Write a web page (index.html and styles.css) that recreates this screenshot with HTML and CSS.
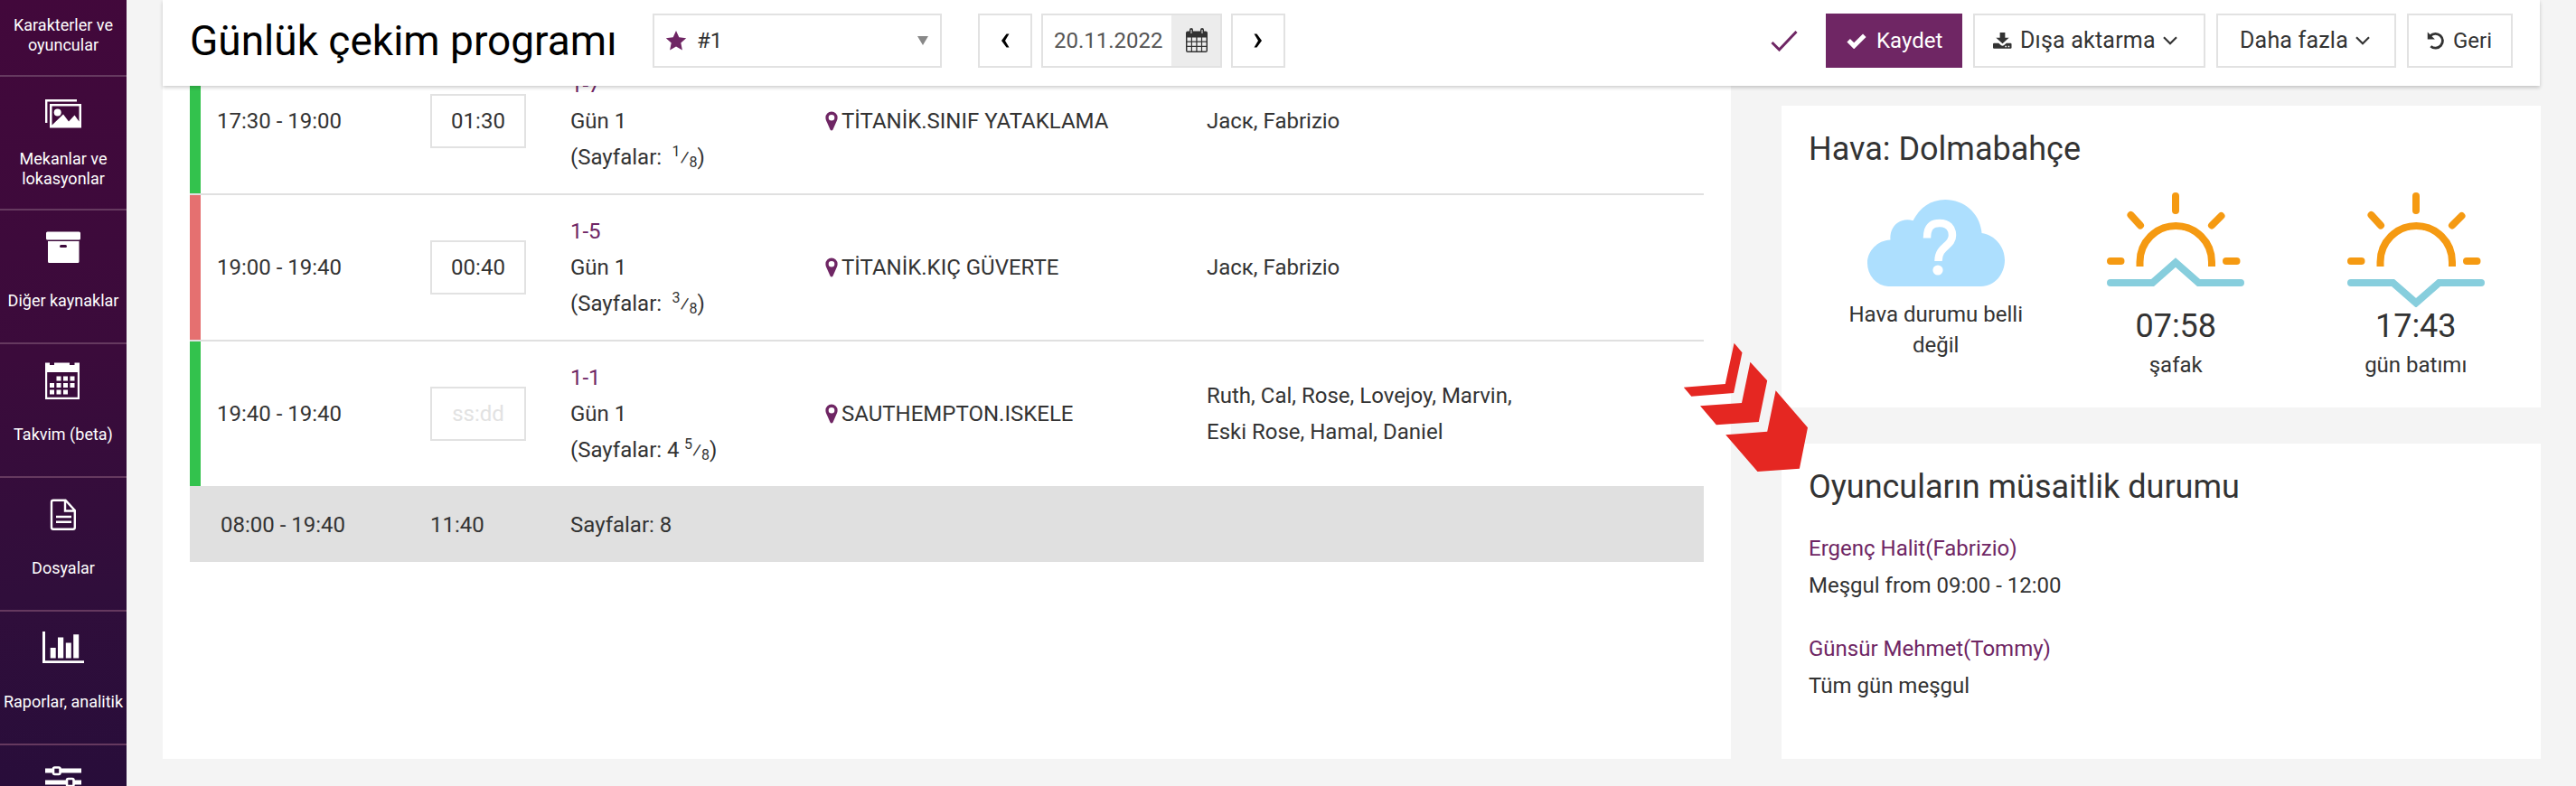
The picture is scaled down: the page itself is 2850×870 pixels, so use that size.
FILE: index.html
```html
<!DOCTYPE html>
<html lang="tr">
<head>
<meta charset="utf-8">
<title>Günlük çekim programı</title>
<link rel="stylesheet" href="styles.css">
</head>
<body>
<div class="app">
  <nav class="sidebar">
    <div class="nav-list">
      <a class="nav-item nav-item--two">
        <svg class="nav-icon" viewBox="0 0 48 48"></svg>
        <span class="nav-label">Karakterler ve<br>oyuncular</span>
      </a>
      <a class="nav-item nav-item--two">
        <svg class="nav-icon" viewBox="0 0 48 48"><path d="M5.2 35V10.200H39" fill="none" stroke="#fff" stroke-width="2.400"/><path fill="#fff" fill-rule="evenodd" d="M9 14h35v26.500H9zM11.500 16.500v21L24 25.500l6 8 6.500-7 5 7v-17z"/><circle cx="17.700" cy="23.500" r="4" fill="#fff"/></svg>
        <span class="nav-label">Mekanlar ve<br>lokasyonlar</span>
      </a>
      <a class="nav-item">
        <svg class="nav-icon" viewBox="0 0 48 48" fill="#fff"><rect x="5" y="7.500" width="38" height="9" rx="1.500"/><path fill-rule="evenodd" d="M7 18h34.500v22.500a1.500 1.500 0 0 1-1.500 1.500H8.500A1.500 1.500 0 0 1 7 40.500zM21.500 22a1.500 1.500 0 0 0 0 3h5a1.500 1.500 0 0 0 0-3z"/></svg>
        <span class="nav-label">Diğer kaynaklar</span>
      </a>
      <a class="nav-item">
        <svg class="nav-icon" viewBox="0 0 48 48" fill="#fff"><path fill-rule="evenodd" d="M4 4.500h5v2.500h5v-2.500h17v2.500h5.500v-2.500H42V45H4zM6.200 15v27.700h33.600V15z"/><path d="M16.500 19.500h5v5h-5zm7.500 0h5v5h-5zm7.500 0h5v5h-5zM9 27h5v5H9zm7.500 0h5v5h-5zm7.500 0h5v5h-5zm7.500 0h5v5h-5zM9 34.500h5v5H9zm7.500 0h5v5h-5zm7.500 0h5v5h-5z"/></svg>
        <span class="nav-label">Takvim (beta)</span>
      </a>
      <a class="nav-item">
        <svg class="nav-icon" viewBox="0 0 48 48" fill="none" stroke="#fff" stroke-width="2.400"><path d="M13 8.700h13.500L36.800 20v18.800a2 2 0 0 1-2 2H13a2 2 0 0 1-2-2V10.700a2 2 0 0 1 2-2zM26 8.700V20.500h10.800"/><path d="M16 27h17M16 32.800h17" stroke-width="2.600"/></svg>
        <span class="nav-label">Dosyalar</span>
      </a>
      <a class="nav-item">
        <svg class="nav-icon" viewBox="0 0 48 48" fill="#fff"><path d="M1 6h3v32.200h43V41H1zM9.700 24h6v11.500h-6zm8.300-11.500h6.200v23H18zm8.800 6h6v17h-6zm8.400-9.200h6v26.200h-6z"/></svg>
        <span class="nav-label">Raporlar, analitik</span>
      </a>
      <a class="nav-item">
        <svg class="nav-icon" viewBox="0 0 48 48"><path fill="#fff" d="M4 9.500h40v5H4zm0 13h40v5H4z"/><rect x="13" y="8.500" width="7.500" height="7.500" rx="1.500" fill="#2a0d39" stroke="#fff" stroke-width="2.600"/><rect x="28" y="21" width="7.500" height="8" rx="1.500" fill="#2a0d39" stroke="#fff" stroke-width="2.600"/></svg>
      </a>
    </div>
  </nav>

  <div class="page">
    <header class="topbar">
      <h1 class="title">Günlük çekim programı</h1>
      <div class="select">
        <svg class="star" viewBox="0 0 24 24"><path fill="#6f2664" d="M12 1l3.300 7.300 7.900.9-5.900 5.400 1.600 7.900L12 18.500l-6.900 4 1.600-7.900L.8 9.200l7.900-.9z"/></svg>
        <span>#1</span>
        <svg class="caret" viewBox="0 0 12 10"><path fill="#888" d="M0 0h12L6 10z"/></svg>
      </div>
      <div class="date-nav">
        <button class="btn btn-square"><svg viewBox="0 0 10 16"><path fill="#000" d="M6.500.5h3L5 8l4.500 7.500h-3L1 8z"/></svg></button>
        <div class="date">
          <span class="date-value">20.11.2022</span>
          <span class="date-icon"><svg viewBox="0 0 24 28"><path fill="#333" fill-rule="evenodd" d="M2 3.500h2V2a2 2 0 0 1 4 0v1.500h8V2a2 2 0 0 1 4 0v1.500h2a2 2 0 0 1 2 2V25a2 2 0 0 1-2 2H2a2 2 0 0 1-2-2V5.500a2 2 0 0 1 2-2zM1.500 10.500v4h4.300v-4zm5.500 0v4h4.300v-4zm5.600 0v4h4.300v-4zm5.500 0v4h4.400v-4zM1.500 15.700v4h4.300v-4zm5.500 0v4h4.300v-4zm5.600 0v4h4.300v-4zm5.500 0v4h4.400v-4zM1.500 21v4.500h4.300V21zM7 21v4.500h4.300V21zm5.600 0v4.500h4.300V21zm5.500 0v4.500h4.400V21z"/><path stroke="#ececec" stroke-width="1" d="M6 2v4M18 2v4"/></svg></span>
        </div>
        <button class="btn btn-square"><svg viewBox="0 0 10 16"><path fill="#000" d="M3.500.5h-3L5 8 .5 15.500h3L9 8z"/></svg></button>
      </div>
      <div class="actions">
        <svg class="saved" viewBox="0 0 30 24"><path d="M1.500 14l8 8L28.500 2" fill="none" stroke="#6f2664" stroke-width="3"/></svg>
        <button class="btn btn-primary"><svg class="i-check" viewBox="0 0 22 18"><path d="M2.200 8.800l6 6L19.800 3.200" fill="none" stroke="#fff" stroke-width="5"/></svg>Kaydet</button>
        <button class="btn btn-menu btn-export"><svg class="i-down" viewBox="0 0 22 20"><path fill="#333" d="M8 .5h6v6h4.500L11 13.500 3.500 6.500H8z"/><path fill="#333" fill-rule="evenodd" d="M1.200 13h5.300l3 2.500q1.500 1 3 0l3-2.500h4.800q1.200 0 1.200 1.200v3.800q0 1.200-1.200 1.200H1.200Q0 19.200 0 18v-3.800Q0 13 1.200 13zM14 16v1.500h1.700V16zm3.400 0v1.500h1.700V16z"/></svg>Dışa aktarma<svg class="i-chev" viewBox="0 0 16 10"><path d="M1 1.300l7 7 7-7" fill="none" stroke="#333" stroke-width="2.200"/></svg></button>
        <button class="btn btn-menu btn-more">Daha fazla<svg class="i-chev" viewBox="0 0 16 10"><path d="M1 1.300l7 7 7-7" fill="none" stroke="#333" stroke-width="2.200"/></svg></button>
        <button class="btn btn-back"><svg class="i-undo" viewBox="0 0 22 22"><path d="M4 5.500A8.300 8.300 0 1 1 4.500 17.500" fill="none" stroke="#333" stroke-width="3"/><path fill="#333" d="M.8 1v8.500h8.500z"/></svg>Geri</button>
      </div>
    </header>

    <div class="columns">
      <main class="panel schedule">
        <div class="rows">
          <div class="row row--green">
            <div class="time">17:30 - 19:00</div>
            <div class="dur"><span class="field">01:30</span></div>
            <div class="scene"><a>1-7</a><br>Gün 1<br>(Sayfalar: <span class="frac">&nbsp;<sup>1</sup>⁄<sub>8</sub></span>)</div>
            <div class="place"><svg class="pin" viewBox="0 0 14 22"><path fill="#6f2664" fill-rule="evenodd" d="M7 .5a6.600 6.600 0 0 1 6.600 6.800c0 2.200-.8 3.400-1.600 5.200L8.500 20.500q-1.500 2-3 0L2 12.500C1.200 10.700.4 9.500.4 7.300A6.600 6.600 0 0 1 7 .5zM7 4a3.300 3.300 0 1 0 0 6.600A3.300 3.300 0 0 0 7 4z"/></svg>TİTANİK.SINIF YATAKLAMA</div>
            <div class="cast">Jacк, Fabrizio</div>
          </div>
          <div class="row row--red">
            <div class="time">19:00 - 19:40</div>
            <div class="dur"><span class="field">00:40</span></div>
            <div class="scene"><a>1-5</a><br>Gün 1<br>(Sayfalar: <span class="frac">&nbsp;<sup>3</sup>⁄<sub>8</sub></span>)</div>
            <div class="place"><svg class="pin" viewBox="0 0 14 22"><path fill="#6f2664" fill-rule="evenodd" d="M7 .5a6.600 6.600 0 0 1 6.600 6.800c0 2.200-.8 3.400-1.600 5.200L8.500 20.500q-1.500 2-3 0L2 12.500C1.200 10.700.4 9.500.4 7.300A6.600 6.600 0 0 1 7 .5zM7 4a3.300 3.300 0 1 0 0 6.600A3.300 3.300 0 0 0 7 4z"/></svg>TİTANİK.KIÇ GÜVERTE</div>
            <div class="cast">Jacк, Fabrizio</div>
          </div>
          <div class="row row--green">
            <div class="time">19:40 - 19:40</div>
            <div class="dur"><span class="field field--empty">ss:dd</span></div>
            <div class="scene"><a>1-1</a><br>Gün 1<br>(Sayfalar: 4<span class="frac">&nbsp;<sup>5</sup>⁄<sub>8</sub></span>)</div>
            <div class="place"><svg class="pin" viewBox="0 0 14 22"><path fill="#6f2664" fill-rule="evenodd" d="M7 .5a6.600 6.600 0 0 1 6.600 6.800c0 2.200-.8 3.400-1.600 5.200L8.500 20.500q-1.500 2-3 0L2 12.500C1.200 10.700.4 9.500.4 7.300A6.600 6.600 0 0 1 7 .5zM7 4a3.300 3.300 0 1 0 0 6.600A3.300 3.300 0 0 0 7 4z"/></svg>SAUTHEMPTON.ISKELE</div>
            <div class="cast">Ruth, Cal, Rose, Lovejoy, Marvin,<br>Eski Rose, Hamal, Daniel</div>
          </div>
          <div class="total">
            <div class="time">08:00 - 19:40</div>
            <div class="dur">11:40</div>
            <div class="scene">Sayfalar: 8</div>
          </div>
        </div>
      </main>

      <aside class="side">
        <section class="panel weather">
          <h2>Hava: Dolmabahçe</h2>
          <div class="weather-grid">
            <div class="w-cell">
              <svg class="w-icon" viewBox="0 0 160 134"><path fill="#addffe" d="M27 111A24 26 0 0 1 4 85C4 72 15 60 29.500 59.500C28 45 40 34 54.500 38.200C62 24 74 15 90 15C112 15 129 31 130.500 52C145 54 156 67 156 82C156 97 145 111 130 111z"/><path fill="none" stroke="#fff" stroke-width="8.500" d="M70 57.500C70 45 75.500 41 84 41C93 41 98 46 98 54.500C98 67 82.500 66 82.500 83"/><circle cx="82" cy="93" r="5.600" fill="#fff"/></svg>
              <div class="w-note">Hava durumu belli<br>değil</div>
            </div>
            <div class="w-cell">
              <svg class="w-icon" viewBox="0 0 160 134" fill="none" stroke-width="8"><g stroke="#f59a12"><path stroke-linecap="round" d="M80 11V27M30.500 32L41 43.500M130.500 33L120 43.500M8 83H19.500M136 83H147.500"/><path d="M40.500 89V84A39.700 40 0 0 1 120 84V89"/></g><path stroke="#87cedd" stroke-linecap="round" d="M8 107H54.500L80 84.500L105.500 107H152"/></svg>
              <div class="w-time">07:58</div>
              <div class="w-label">şafak</div>
            </div>
            <div class="w-cell">
              <svg class="w-icon" viewBox="0 0 160 134" fill="none" stroke-width="8"><g stroke="#f59a12"><path stroke-linecap="round" d="M80 11V27M30.500 32L41 43.500M130.500 33L120 43.500M8 83H19.500M136 83H147.500"/><path d="M40.500 89V84A39.700 40 0 0 1 120 84V89"/></g><path stroke="#87cedd" stroke-linecap="round" d="M8 107H54.500L80 129.300L105.500 107H152"/></svg>
              <div class="w-time">17:43</div>
              <div class="w-label">gün batımı</div>
            </div>
          </div>
        </section>
        <section class="panel avail">
          <h2>Oyuncuların müsaitlik durumu</h2>
          <div class="person"><a>Ergenç Halit(Fabrizio)</a><p>Meşgul from 09:00 - 12:00</p></div>
          <div class="person"><a>Günsür Mehmet(Tommy)</a><p>Tüm gün meşgul</p></div>
        </section>
      </aside>
    </div>
  </div>
  <svg class="pointer" viewBox="0 0 140 144" fill="#e52722"><path d="M58.600 1.700L67.500 12.300 58.100 57 11.300 60.700 2.800 50.700 48.800 47zM76.400 22.700L95.200 43.300 85.800 89 38.900 92.300 21 71.300 67 68zM104.600 54.300L140 95.300 130.900 140.700 84.500 144 49.200 103.300 95.200 99.700z"/></svg>
</div>
</body>
</html>
```

FILE: styles.css
```css
* { box-sizing: border-box; }

body {
  margin: 0;
  background: #f4f4f4;
  color: #333;
  font-family: Roboto, "Liberation Sans", sans-serif;
  font-size: 24px;
  line-height: 40px;
}

h1, h2, p { margin: 0; font-weight: 400; }
a { color: #6f2664; }
svg { display: block; flex: none; }

.app {
  position: relative;
  display: flex;
  width: 2850px;
  height: 870px;
  overflow: hidden;
}

/* Sidebar */
.sidebar {
  flex: none;
  width: 140px;
  height: 870px;
  overflow: hidden;
  background: linear-gradient(175deg, #42083b 0%, #3b0b3b 45%, #300e3b 75%, #280d3a 100%);
}
.nav-list { margin-top: -63px; }
.nav-item {
  display: flex;
  flex-direction: column;
  align-items: center;
  height: 148px;
  padding-top: 16px;
  border-bottom: 2px solid #65395f;
}
.nav-icon { width: 48px; height: 48px; }
.nav-label {
  margin-top: 25px;
  color: #fff;
  font-size: 18px;
  line-height: 22px;
  text-align: center;
  white-space: nowrap;
}
.nav-item--two .nav-label { margin-top: 16px; }

/* Page */
.page { flex: none; width: 2631px; margin-left: 40px; }

.topbar {
  position: relative;
  z-index: 2;
  display: flex;
  align-items: flex-start;
  width: 2630px;
  height: 95px;
  padding: 15px 30px 0;
  background: #fff;
  box-shadow: 0 2px 4px rgba(0, 0, 0, .2);
}
.title {
  width: 512px;
  color: #000;
  font-size: 46px;
  line-height: 60px;
  white-space: nowrap;
}
.select {
  display: flex;
  align-items: center;
  width: 320px;
  height: 60px;
  padding: 0 13px 0 12px;
  border: 2px solid #e2e2e2;
}
.star { width: 24px; height: 24px; margin-right: 11px; }
.caret { width: 12px; height: 10px; margin-left: auto; }

.date-nav { display: flex; gap: 10px; margin-left: 40px; }
.btn {
  display: flex;
  align-items: center;
  height: 60px;
  padding: 0;
  border: 2px solid #e2e2e2;
  background: #fff;
  color: #333;
  font: inherit;
  white-space: nowrap;
}
.btn-square { width: 60px; justify-content: center; }
.btn-square svg { width: 10px; height: 16px; }
.date { display: flex; width: 200px; height: 60px; border: 2px solid #e2e2e2; color: #555; }
.date-value { width: 142px; padding-left: 12px; line-height: 56px; }
.date-icon {
  display: flex;
  flex: 1;
  align-items: center;
  justify-content: center;
  padding-left: 2px;
  background: #ececec;
}
.date-icon svg { width: 24px; height: 28px; }

.actions { display: flex; margin-left: auto; align-items: center; }
.saved { width: 30px; height: 24px; margin-right: 31px; }
.btn-primary { width: 151px; margin-right: 12px; padding-left: 21px; background: #6f2664; border-color: #6f2664; color: #fff; }
.i-check { width: 22px; height: 18px; margin-right: 11px; }
.btn-menu { font-size: 25px; letter-spacing: .2px; }
.btn-export { width: 257px; margin-right: 12px; padding-left: 20px; }
.i-down { width: 21px; height: 20px; margin-right: 9px; }
.i-chev { width: 16px; height: 10px; margin-left: 8px; }
.btn-more { width: 199px; margin-right: 12px; padding-left: 24px; }
.btn-back { width: 117px; padding-left: 20px; }
.i-undo { width: 21px; height: 22px; margin-right: 8px; }

.columns { display: flex; justify-content: space-between; height: 745px; }
.panel { background: #fff; }

/* Schedule */
.schedule { width: 1735px; height: 745px; padding: 0 30px; overflow: hidden; }
.rows { margin-top: -41px; }
.row, .total {
  display: grid;
  grid-template-columns: 236px 155px 282px 422px 1fr;
  align-items: center;
}
/* The colour stripe stops above the row divider. */
.row {
  height: 162px;
  padding-left: 30px;
  border-bottom: 2px solid #e0e0e0;
  background: linear-gradient(var(--stripe), var(--stripe)) 0 0 / 12px 100% no-repeat padding-box;
}
.row--green { --stripe: #33c24d; }
.row--red { --stripe: #e57070; }
.field {
  display: block;
  width: 106px;
  height: 60px;
  border: 2px solid #e2e2e2;
  line-height: 56px;
  text-align: center;
}
.field--empty { color: #e2e2e2; }
.scene { white-space: nowrap; }
.frac { font-size: 22px; }
.frac sup, .frac sub { font-size: 16px; line-height: 0; }
.frac sup { vertical-align: 9px; }
.frac sub { vertical-align: -3px; }
.place { display: flex; align-items: center; white-space: nowrap; }
.pin { width: 14px; height: 22px; margin-right: 4px; }
.total {
  height: 82px;
  padding-left: 34px;
  grid-template-columns: 232px 155px 1fr;
  background: #e0e0e0;
}

/* Right column */
.side { display: flex; flex-direction: column; gap: 40px; width: 840px; padding-top: 22px; }
h2 { font-size: 36px; line-height: 44px; }
.weather { height: 334px; padding: 26px 0 0 30px; }
.weather-grid {
  display: grid;
  grid-template-columns: repeat(3, 265.500px);
  margin-left: 8px;
  margin-top: 19px;
  text-align: center;
}
.w-cell { display: flex; flex-direction: column; align-items: center; }
.w-icon { width: 160px; height: 134px; }
.w-note { line-height: 34px; margin-top: -9px; }
.w-time { font-size: 36px; line-height: 40px; margin-top: 1px; }
.w-label { line-height: 40px; margin-top: 3px; }
.avail { flex: 1; padding: 26px 30px 0; }
.person { margin-top: 30px; }
h2 + .person { margin-top: 26px; }
.person p { margin-top: 1px; }

/* Callout arrow */
.pointer { position: absolute; left: 1860px; top: 378px; width: 140px; height: 144px; z-index: 3; }
```
